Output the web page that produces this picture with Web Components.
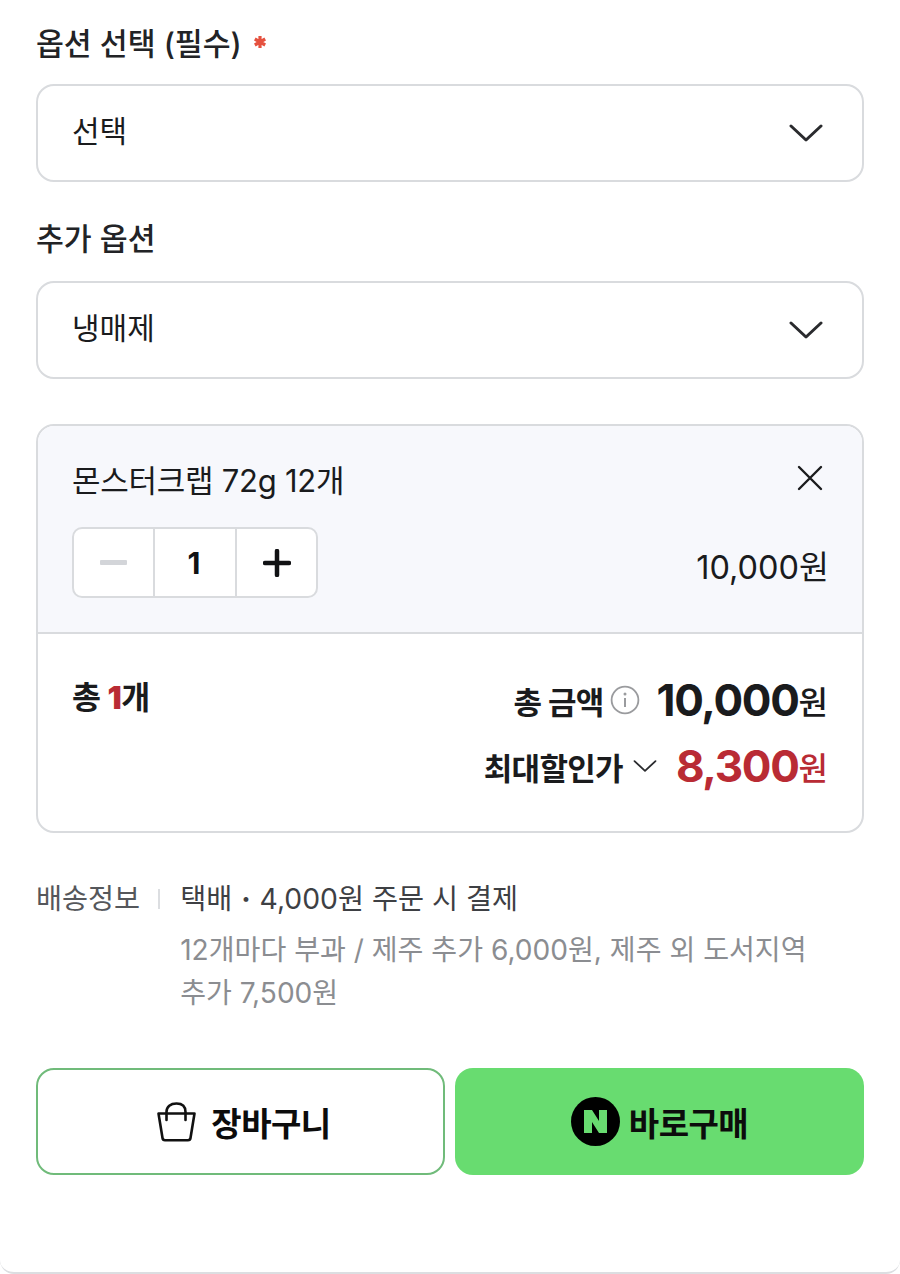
<!DOCTYPE html>
<html lang="ko"><head><meta charset="utf-8"><style>
html,body{margin:0;padding:0;background:#fff}
body{font-family:Inter,"Noto Sans CJK KR",sans-serif;color:#1a1b1d;width:900px;height:1274px;overflow:hidden}
</style></head><body>
<order-sheet>
  <option-field label="옵션 선택 (필수)" required value="선택"></option-field>
  <option-field label="추가 옵션" value="냉매제" style="margin-top:35px;--gap:22px"></option-field>
  <order-panel style="margin-top:45px"></order-panel>
  <ship-info></ship-info>
  <buy-bar></buy-bar>
</order-sheet>
<script>
const def=(n,css,html)=>customElements.define(n,class extends HTMLElement{connectedCallback(){if(this.shadowRoot)return;const r=this.attachShadow({mode:'open'});r.innerHTML='<style>'+css+'</style>'+(typeof html==='function'?html(this):html);}});
def('order-sheet',`:host{display:block;box-sizing:border-box;width:900px;height:1274px;padding:22px 36px 0;border-bottom:2px solid #dcdee1;border-radius:0 0 14px 14px}`,`<slot></slot>`);
def('chevron-down',`:host{display:inline-flex}`,e=>`<svg width="${e.getAttribute('w')||34}" height="${e.getAttribute('h')||20}" viewBox="0 0 34 20" fill="none"><path d="M2 3 L17 17 L32 3" stroke="${e.getAttribute('c')||'#2a2b2e'}" stroke-width="${e.getAttribute('sw')||3}" stroke-linecap="round" stroke-linejoin="round"/></svg>`);
def('option-field',`:host{display:block}
.l{font-size:30.300px;line-height:42px;font-weight:500;color:#222326;display:flex;align-items:center;position:relative;top:1px}
.s{margin-left:11px;display:block;position:relative;top:-2px}
.b{margin-top:var(--gap,20px);height:98px;box-sizing:border-box;border:2px solid #d9dbde;border-radius:18px;display:flex;align-items:center;justify-content:space-between;padding:0 39px 0 34px;font-size:30px;background:#fff}
.v{position:relative;top:-4px}`,e=>`<div class="l">${e.getAttribute('label')}${e.hasAttribute('required')?'<svg class="s" width="14" height="14" viewBox="0 0 14 14"><path d="M7 1V13M1.800 4L12.200 10M12.200 4L1.800 10" stroke="#e5513f" stroke-width="3.200"/></svg>':''}</div><div class="b"><span class="v">${e.getAttribute('value')}</span><chevron-down></chevron-down></div>`);
def('qty-stepper',`:host{display:flex;width:246px;height:71px;box-sizing:border-box;border:2px solid #d9dbde;border-radius:10px;background:#fff}
div{flex:1;display:flex;align-items:center;justify-content:center;font-size:30px;font-weight:700;color:#111214}
div+div{border-left:2px solid #d9dbde}`,`<div><svg width="28" height="6"><rect y="0" width="27" height="5" rx="1" fill="#d3d5d9"/></svg></div><div><span style="position:relative;left:-1px">1</span></div><div><svg width="28" height="28" viewBox="0 0 28 28" style="position:relative;left:1px"><path d="M14 2V26M2 14H26" stroke="#111214" stroke-width="4.500" stroke-linecap="round"/></svg></div>`);
def('order-panel',`:host{display:block;border:2px solid #d9dbde;border-radius:18px;overflow:hidden;height:409px;box-sizing:border-box;background:#fff}
.top{background:#f7f8fc;height:208px;box-sizing:border-box;border-bottom:2px solid #d9dbde;padding:33px 34px 0}
.r1{display:flex;justify-content:space-between;align-items:center;font-size:31px;line-height:44px;letter-spacing:-.25px}
.r2{display:flex;justify-content:space-between;align-items:center;margin-top:24px}
.p{font-size:32.500px;position:relative;top:2px;left:1px}
.bot{padding:42px 34px 0;display:flex;justify-content:space-between}
.c{font-size:31.500px;font-weight:700;line-height:44px;letter-spacing:-.5px}.c b{color:#b92b34}
.rt{display:flex;flex-direction:column;align-items:flex-end;gap:18px}
.row{display:flex;align-items:center;height:48px}
.k{font-size:31px;font-weight:700;letter-spacing:-.7px}
.n{font-size:44px;font-weight:700;letter-spacing:-1.300px;margin-left:17px}
.u{font-size:32px;font-weight:500}
.red{color:#b92b34}
svg{display:block}`,`<div class="top"><div class="r1"><span>몬스터크랩 72g 12개</span><svg width="26" height="26" viewBox="0 0 26 26" style="margin-right:5px;position:relative;top:-3px"><path d="M2 2L24 24M24 2L2 24" stroke="#1a1b1d" stroke-width="2.400" stroke-linecap="round"/></svg></div><div class="r2"><qty-stepper></qty-stepper><span class="p">10,000원</span></div></div>
<div class="bot"><div class="c">총 <b>1</b>개</div><div class="rt"><div class="row"><span class="k">총 금액</span><svg width="30" height="30" viewBox="0 0 30 30" style="margin-left:6px"><circle cx="15" cy="15" r="13.400" fill="none" stroke="#9a9b9e" stroke-width="1.800"/><circle cx="15" cy="9" r="1.500" fill="#9a9b9e"/><path d="M15 13V22" stroke="#9a9b9e" stroke-width="2"/></svg><span class="n">10,000</span><span class="u">원</span></div><div class="row"><span class="k">최대할인가</span><chevron-down w="24" h="14" sw="2.600" style="margin-left:10px"></chevron-down><span class="n red" style="margin-left:19px">8,300</span><span class="u red">원</span></div></div></div>`);
def('ship-info',`:host{display:grid;grid-template-columns:auto 1fr;align-items:start;margin-top:41px;font-size:28.300px}
.k{color:#55575b;line-height:50px;display:flex;align-items:center}
.k i{display:block;width:2px;height:20px;background:#dcdee1;margin:0 20px 0 18px}
.v{color:#3e4044;line-height:50px;font-size:28.300px}
.d{font-weight:700;margin:0 1px}
.g{color:#8b8d91;line-height:43px;margin-top:5px;width:640px;font-size:28.100px}`,`<div class="k">배송정보<i></i></div><div><div class="v">택배 <span class="d">·</span> 4,000원 주문 시 결제</div><div class="g">12개마다 부과 / 제주 추가 6,000원, 제주 외 도서지역 추가 7,500원</div></div>`);
def('buy-bar',`:host{display:flex;justify-content:space-between;margin-top:53px}
.b{width:409px;flex:none;height:107px;box-sizing:border-box;border-radius:18px;display:flex;align-items:center;justify-content:center;font-size:33px;font-weight:700;color:#0c0c0c;letter-spacing:-.5px}
.o{border:2px solid #70bb7a;background:#fff;gap:15px;padding-left:7px}
.f{background:#68dc70;gap:9px}
.n{width:49px;height:49px;flex:none}`,`<div class="b o"><svg width="39" height="40" viewBox="0 0 39 40" fill="none" stroke="#111" stroke-width="2.600" stroke-linejoin="round" stroke-linecap="round"><path d="M1.500 11.500H37.500L33.500 36Q33.200 38.200 31 38.200H8Q5.800 38.200 5.500 36Z" /><path d="M9.500 18V10C9.500 4.500 13.500 1.500 19.500 1.500S28.500 4.500 28.500 10V18"/></svg><span>장바구니</span></div><div class="b f"><svg class="n" viewBox="0 0 49 49"><circle cx="24.500" cy="24.500" r="24.500" fill="#000"/><path d="M13 13H21L28 24V13H36V36H28L21 25V36H13Z" fill="#68dc70"/></svg><span>바로구매</span></div>`);
</script></body></html>
